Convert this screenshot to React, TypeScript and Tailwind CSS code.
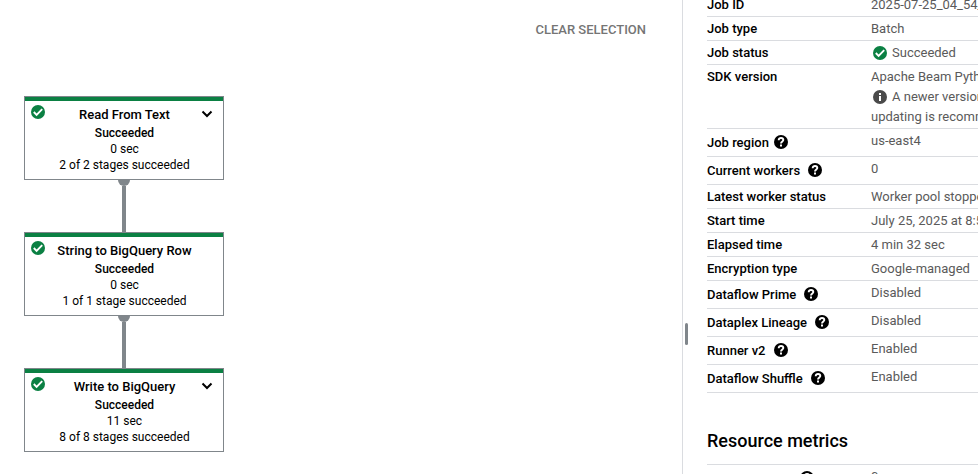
import type { ReactNode } from "react";

function CheckIcon() {
  return (
    <svg viewBox="0 0 14 14" className="block size-3.5 shrink-0" role="img" aria-label="Succeeded">
      <circle cx="7" cy="7" r="7" fill="#0b8043" />
      <path d="M2.8 7 5.600 9.800 11.200 4.200" fill="none" stroke="#fff" strokeWidth="1.9" />
    </svg>
  );
}

function InfoIcon() {
  return (
    <svg viewBox="0 0 14 14" className="block size-3.5 shrink-0" aria-hidden="true">
      <circle cx="7" cy="7" r="7" fill="#4a4a4a" />
      <path d="M6 3h2v2H6zM6 6h2v5H6z" fill="#fff" />
    </svg>
  );
}

function HelpIcon() {
  return (
    <svg viewBox="0 0 14 14" className="block size-3.5" aria-hidden="true">
      <circle cx="7" cy="7" r="7" fill="#000" />
      <path
        d="M4.700 5.300C4.700 3.700 5.700 3 7 3S9.300 3.700 9.300 5.100C9.300 6.500 7 6.600 7 8.600"
        fill="none"
        stroke="#fff"
        strokeWidth="1.9"
      />
      <path d="M6 9.500h2v1.900H6z" fill="#fff" />
    </svg>
  );
}

type Step = { name: string; time: string; stages: string; expandable?: boolean };

const steps: Step[] = [
  { name: "Read From Text", time: "0 sec", stages: "2 of 2 stages succeeded", expandable: true },
  { name: "String to BigQuery Row", time: "0 sec", stages: "1 of 1 stage succeeded" },
  { name: "Write to BigQuery", time: "11 sec", stages: "8 of 8 stages succeeded", expandable: true },
];

function StepNode({ step }: { step: Step }) {
  return (
    <div className="relative h-[84px] w-[200px] border border-[#80868b] bg-white text-center text-xs leading-4">
      <div className="h-1 bg-[#0b8043]" />
      <div className="absolute top-2 left-1.5">
        <CheckIcon />
      </div>
      {step.expandable && (
        <button type="button" aria-label={`Expand ${step.name}`} className="absolute top-2 right-1 p-1">
          <svg viewBox="0 0 16 10" className="block h-2.5 w-4" aria-hidden="true">
            <path d="M3.500 2.500 8 7l4.500-4.500" fill="none" stroke="#000" strokeWidth="2" />
          </svg>
        </button>
      )}
      <div className="pt-1 pl-px">
        <h3 className="text-[13px] leading-5 font-medium">{step.name}</h3>
        <p className="font-medium">Succeeded</p>
        <p>{step.time}</p>
        <p>{step.stages}</p>
      </div>
    </div>
  );
}

function Connector() {
  return (
    <div className="flex h-[52px] flex-col items-center">
      <div className="h-1.5 w-3 rounded-b-full bg-[#80868b]" />
      <div className="w-1 flex-1 bg-[#80868b]" />
    </div>
  );
}

type RowProps = { label: string; help?: "near" | "apart"; children: ReactNode };

function Row({ label, help, children }: RowProps) {
  return (
    <tr className="border-b border-[#dadce0] align-top">
      <th scope="row" className="w-[164px] pt-0.5 pb-px text-left font-medium text-black">
        {help ? (
          <span className={`flex h-6 items-center ${help === "near" ? "gap-[5px]" : "gap-2"}`}>
            {label}
            <button type="button" aria-label={`Help: ${label}`} className="pb-0.5">
              <HelpIcon />
            </button>
          </span>
        ) : (
          label
        )}
      </th>
      <td className="pt-0.5 pb-px text-[#5a5a5a]">{children}</td>
    </tr>
  );
}

const tableStyle = "w-[480px] table-fixed border-collapse text-[13px] leading-5 whitespace-nowrap";

export default function App() {
  return (
    <div className="flex h-screen overflow-hidden bg-white font-[Roboto,'Liberation_Sans',sans-serif] text-black">
      <main className="min-w-0 flex-1 pl-6">
        <div className="flex h-24 items-start justify-end pt-5 pr-9">
          <button type="button" className="text-[13px] leading-5 font-medium text-[#757575]">
            CLEAR SELECTION
          </button>
        </div>
        <div className="flex w-[200px] flex-col items-center">
          <StepNode step={steps[0]} />
          <Connector />
          <StepNode step={steps[1]} />
          <Connector />
          <StepNode step={steps[2]} />
        </div>
      </main>

      <aside className="flex w-[296px] shrink-0 overflow-hidden border-l border-[#dadce0]">
        <div className="w-6 shrink-0 pt-[323px] pl-0.5">
          <div role="separator" aria-orientation="vertical" className="h-[22px] w-[3px] rounded-xs bg-[#80868b]" />
        </div>
        <div className="-mt-[7px] shrink-0">
          <table className={tableStyle}>
            <tbody>
              <Row label="Job ID">2025-07-25_04_54_01</Row>
              <Row label="Job type">Batch</Row>
              <Row label="Job status">
                <span className="flex items-center gap-[5px] pl-0.5">
                  <CheckIcon />
                  Succeeded
                </span>
              </Row>
              <Row label="SDK version">
                <p>Apache Beam Python SDK</p>
                <p className="flex items-center gap-[5px] pl-0.5">
                  <InfoIcon />A newer version exists
                </p>
                <p>updating is recommended</p>
              </Row>
              <Row label="Job region" help="near">us-east4</Row>
              <Row label="Current workers" help="apart">0</Row>
              <Row label="Latest worker status">Worker pool stopped.</Row>
              <Row label="Start time">July 25, 2025 at 8:54</Row>
              <Row label="Elapsed time">4 min 32 sec</Row>
              <Row label="Encryption type">Google-managed</Row>
              <Row label="Dataflow Prime" help="apart">Disabled</Row>
              <Row label="Dataplex Lineage" help="apart">Disabled</Row>
              <Row label="Runner v2" help="apart">Enabled</Row>
              <Row label="Dataflow Shuffle" help="apart">Enabled</Row>
            </tbody>
          </table>
          <h2 className="pt-9 pb-[11px] text-lg leading-6 font-medium">Resource metrics</h2>
          <table className={`${tableStyle} border-t border-[#dadce0]`}>
            <tbody>
              <Row label="Current vCPUs" help="apart">0</Row>
            </tbody>
          </table>
        </div>
      </aside>
    </div>
  );
}
